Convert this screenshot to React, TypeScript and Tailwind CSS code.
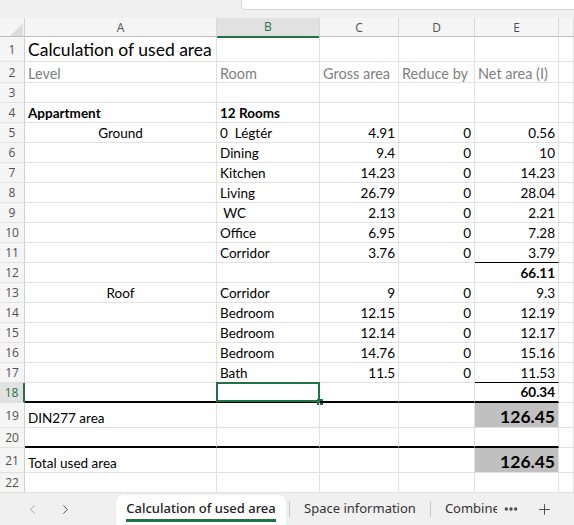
import { ChevronLeft, ChevronRight, MoreHorizontal, Plus } from "lucide-react";
import clsx from "clsx";
import type { ReactNode } from "react";

type Line = "grid" | "thin" | "thick";

const cellFont = "font-['Lato','Liberation_Sans',sans-serif]";

const Cell = ({
  children,
  line = "grid",
  right = false,
  center = false,
  className = "",
}: {
  children?: ReactNode;
  line?: Line;
  right?: boolean;
  center?: boolean;
  className?: string;
}) => (
  <div
    className={clsx(
      "relative flex items-end px-[3px] whitespace-pre border-r border-r-[#e1e1e1] text-[13.5px] leading-[17px] text-black",
      line === "grid" && "border-b border-b-[#e1e1e1]",
      line === "thin" && "border-b border-b-black",
      line === "thick" && "border-b-2 border-b-black",
      right && "justify-end",
      center && "justify-center",
      className
    )}
  >
    {children}
  </div>
);

type RowProps = {
  n: number;
  h?: string;
  a?: ReactNode;
  b?: ReactNode;
  c?: ReactNode;
  d?: ReactNode;
  e?: ReactNode;
  aCls?: string;
  bCls?: string;
  eCls?: string;
  aCenter?: boolean;
  eLine?: Line;
  thick?: boolean;
  active?: boolean;
};

const Row = ({ n, h = "h-[20px]", a, b, c, d, e, aCls, bCls, eCls, aCenter, eLine, thick, active }: RowProps) => {
  const line: Line = thick ? "thick" : "grid";
  return (
    <div className={clsx("grid grid-cols-[25px_192px_103px_79px_76px_84px_1fr]", h)}>
      <div
        className={clsx(
          "flex items-center justify-center pt-[1px] border-b border-b-[#e1e1e1] font-['Open_Sans',sans-serif] text-[12px]",
          active
            ? "bg-[#e1e1e1] text-[#217346] border-r-2 border-r-[#217346]"
            : "bg-[#f5f5f5] text-[#505050] border-r border-r-[#cfcfcf]"
        )}
      >
        {n}
      </div>
      <Cell line={line} center={aCenter} className={aCls}>
        {a}
      </Cell>
      <Cell line={line} className={bCls}>
        {b}
        {active && (
          <>
            <div className="absolute -top-[1px] -left-[1px] -right-[1px] -bottom-[1px] border-2 border-[#217346]" />
            <div className="absolute -right-[4px] -bottom-[4px] w-[6px] h-[6px] bg-[#217346]" />
          </>
        )}
      </Cell>
      <Cell line={line} right>
        {c}
      </Cell>
      <Cell line={line} right>
        {d}
      </Cell>
      <Cell line={eLine ?? line} right className={eCls}>
        {e}
      </Cell>
      <Cell />
    </div>
  );
};

const rooms: [number, string, string, string, string, Line?][] = [
  [5, "0  Légtér", "4.91", "0", "0.56"],
  [6, "Dining", "9.4", "0", "10"],
  [7, "Kitchen", "14.23", "0", "14.23"],
  [8, "Living", "26.79", "0", "28.04"],
  [9, " WC", "2.13", "0", "2.21"],
  [10, "Office", "6.95", "0", "7.28"],
  [11, "Corridor", "3.76", "0", "3.79", "thin"],
];

const roof: [number, string, string, string, string, Line?][] = [
  [13, "Corridor", "9", "0", "9.3"],
  [14, "Bedroom", "12.15", "0", "12.19"],
  [15, "Bedroom", "12.14", "0", "12.17"],
  [16, "Bedroom", "14.76", "0", "15.16"],
  [17, "Bath", "11.5", "0", "11.53", "thin"],
];

const label = "text-[#7f7f7f] text-[14.5px]";
const total = "bg-[#c0c0c0] font-bold text-[17.5px] leading-[20px]";

const cols = ["A", "B", "C", "D", "E", ""];

export default function App() {
  return (
    <div className={clsx("w-[574px] h-[525px] flex flex-col bg-white overflow-hidden", cellFont)}>
      {/* formula bar strip */}
      <div className="h-[18px] flex bg-[#f0f0f0]">
        <div className="w-[241px]" />
        <div className="flex-1 h-[10px] bg-white rounded-bl-[5px] border-l border-b border-[#d6d6d6]" />
      </div>

      {/* column headers */}
      <div className="h-[19px] grid grid-cols-[25px_192px_103px_79px_76px_84px_1fr] bg-[#f5f5f5] border-b border-b-[#bdbdbd] font-['Open_Sans',sans-serif] text-[12px] text-[#505050]">
        <div className="relative border-r border-r-[#cfcfcf]">
          <svg className="absolute right-[1px] bottom-[2px]" width="13" height="13" viewBox="0 0 13 13">
            <polygon points="13,0 13,13 0,13" fill="#dcdcdc" />
          </svg>
        </div>
        {cols.map((c) => (
          <div
            key={c || "f"}
            className={clsx(
              "flex items-center justify-center border-r border-r-[#d8d8d8]",
              c === "B" && "bg-[#e1e1e1] text-[#217346] border-b-2 border-b-[#217346]"
            )}
          >
            {c}
          </div>
        ))}
      </div>

      <Row n={1} h="h-[25px]" a="Calculation of used area" aCls="text-[17.5px] leading-[22px]" />
      <Row
        n={2}
        h="h-[21px]"
        a={<span className={label}>Level</span>}
        b={<span className={label}>Room</span>}
        c={<span className={clsx(label, "mr-auto")}>Gross area</span>}
        d={<span className={clsx(label, "mr-auto")}>Reduce by</span>}
        e={<span className={clsx(label, "mr-auto")}>Net area (I)</span>}
      />
      <Row n={3} />
      <Row n={4} a="Appartment" b="12 Rooms" aCls="font-bold" bCls="font-bold" />
      {rooms.map(([n, b, c, d, e, l]) => (
        <Row key={n} n={n} a={n === 5 ? "Ground" : undefined} aCenter b={b} c={c} d={d} e={e} eLine={l} />
      ))}
      <Row n={12} e="66.11" eCls="font-bold" />
      {roof.map(([n, b, c, d, e, l]) => (
        <Row key={n} n={n} a={n === 13 ? "Roof" : undefined} aCenter b={b} c={c} d={d} e={e} eLine={l} />
      ))}
      <Row n={18} e="60.34" eCls="font-bold" thick active />
      <Row n={19} h="h-[25px]" a="DIN277 area" e="126.45" eCls={total} />
      <Row n={20} thick />
      <Row n={21} h="h-[25px]" a="Total used area" e="126.45" eCls={total} />
      <Row n={22} />

      {/* sheet tabs */}
      <div className="flex-1 flex items-stretch bg-[#f0f0f0] font-['Noto_Sans',sans-serif] text-[13px] text-[#333]">
        <div className="w-[116px] flex items-center pl-[25px] gap-[18px]">
          <ChevronLeft size={15} strokeWidth={1.5} className="text-[#a0a0a0]" />
          <ChevronRight size={15} strokeWidth={1.5} className="text-[#444]" />
        </div>
        <div className="w-[170px] mt-[2px] bg-white rounded-t-[6px] flex items-center justify-center shadow-[0_0_1px_rgba(0,0,0,0.15)]">
          <span className="font-medium text-[#222] border-b-[3px] border-b-[#217346] leading-[17px] pb-[2px] mt-[2px]">
            Calculation of used area
          </span>
        </div>
        <div className="flex items-center">
          <div className="w-px h-[16px] bg-[#c8c8c8] ml-[3px]" />
          <span className="px-[14px]">Space information</span>
          <div className="w-px h-[16px] bg-[#c8c8c8]" />
          <span className="w-[52px] ml-[14px] overflow-hidden whitespace-nowrap">Combine</span>
          <MoreHorizontal size={16} strokeWidth={3} className="ml-[6px] text-[#444]" />
          <Plus size={17} strokeWidth={1.3} className="ml-[17px] text-[#444]" />
        </div>
      </div>
    </div>
  );
}
